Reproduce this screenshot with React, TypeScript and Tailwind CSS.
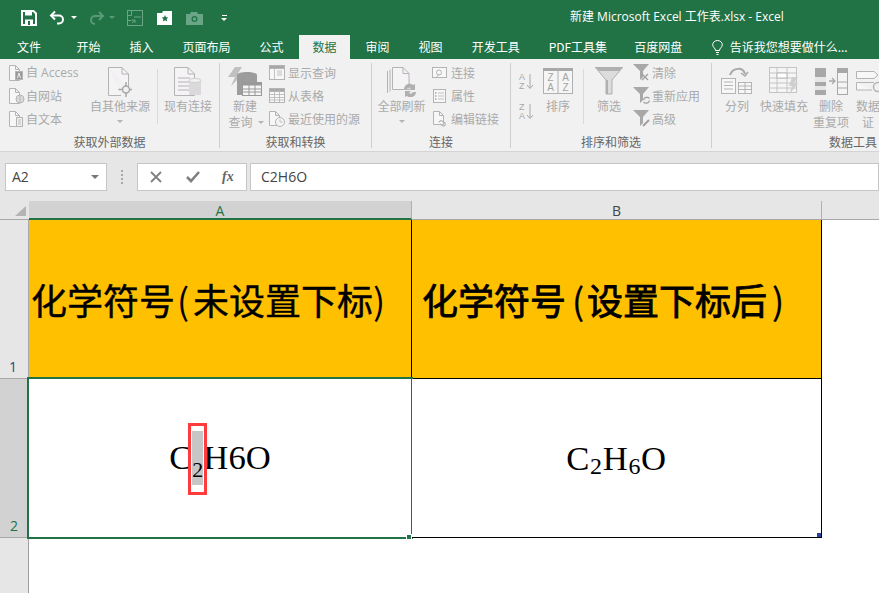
import React from "react";

const FONT = '"Noto Sans CJK SC", "Noto Sans", sans-serif';
const LATIN = '"Open Sans", "Noto Sans CJK SC", sans-serif';
const G = "#b4b4b4";

function Svg({ w, h, children }: { w: number; h: number; children: React.ReactNode }) {
  return (
    <svg width={w} height={h} viewBox={`0 0 ${w} ${h}`} fill="none" stroke={G} strokeWidth="1" className="block shrink-0">
      {children}
    </svg>
  );
}

function Page({ x = 0.5, y = 0.5, w = 12, h = 16, f = 4 }: { x?: number; y?: number; w?: number; h?: number; f?: number }) {
  return <path d={`M${x} ${y}H${x + w - f}L${x + w} ${y + f}V${y + h}H${x}Z M${x + w - f} ${y}V${y + f}H${x + w}`} fill="#f7f7f7" />;
}

function SmallIcon({ kind }: { kind: string }) {
  if (kind === "access")
    return (
      <Svg w={16} h={16}>
        <Page w={10} h={15} />
        <rect x="6.5" y="6.5" width="7" height="8" fill="#9a9a9a" />
        <path d="M8.5 13l1.5-5 1.5 5" stroke="#eee" />
      </Svg>
    );
  if (kind === "web")
    return (
      <Svg w={16} h={16}>
        <Page w={10} h={15} />
        <circle cx="11" cy="11" r="4" fill="#f0f0f0" />
        <path d="M7 11h8M11 7v8M8.5 9h5M8.5 13h5" strokeWidth="0.8" />
      </Svg>
    );
  if (kind === "text")
    return (
      <Svg w={16} h={16}>
        <Page w={10} h={15} />
        <rect x="7.5" y="6.5" width="6" height="9" fill="#f0f0f0" />
        <path d="M9 9h3M9 11h3M9 13h3" strokeWidth="0.8" />
      </Svg>
    );
  if (kind === "show")
    return (
      <Svg w={16} h={16}>
        <rect x="0.5" y="0.5" width="15" height="14" fill="#f7f7f7" />
        <rect x="0.5" y="0.5" width="15" height="3" fill="#a8a8a8" />
        <path d="M5.5 3.5v11M8 6h5M8 8h5M8 10h5" strokeWidth="0.8" />
      </Svg>
    );
  if (kind === "table")
    return (
      <Svg w={16} h={16}>
        <rect x="0.5" y="0.5" width="15" height="14" fill="#f7f7f7" />
        <rect x="0.5" y="0.5" width="15" height="3" fill="#a8a8a8" />
        <path d="M5.5 .5v14M10.5 .5v14M.5 6.5h15M.5 9.5h15M.5 12h15" strokeWidth="0.8" />
      </Svg>
    );
  if (kind === "recent")
    return (
      <Svg w={16} h={16}>
        <Page w={10} h={14} />
        <circle cx="11" cy="11" r="4.5" fill="#f4f4f4" />
        <path d="M11 8.5V11h2.5" strokeWidth="0.8" />
      </Svg>
    );
  if (kind === "conn")
    return (
      <Svg w={16} h={16}>
        <rect x="0.5" y="2.5" width="14" height="10" fill="#f7f7f7" />
        <circle cx="7" cy="7.5" r="2.5" />
        <path d="M4 12.5l3-3" />
      </Svg>
    );
  if (kind === "prop")
    return (
      <Svg w={16} h={16}>
        <rect x="1.5" y="1.5" width="12" height="13" fill="#f7f7f7" />
        <path d="M6 5h6M6 8h6M6 11h6" strokeWidth="0.8" />
        <path d="M3 5h1.5M3 8h1.5M3 11h1.5" stroke="#888" />
      </Svg>
    );
  if (kind === "edit")
    return (
      <Svg w={16} h={16}>
        <Page x={1.5} w={10} h={13} />
        <path d="M7 11.5a2 2 0 013-1.5l3 2a2 2 0 01-2 3l-3-2" strokeWidth="1.2" />
      </Svg>
    );
  const funnel = <path d="M0 0H16L10 7V13L7 16V7Z" fill="#a8a8a8" stroke="none" />;
  return (
    <Svg w={18} h={18}>
      {funnel}
      {kind === "clear" && <path d="M9 10l6 6M15 10l-6 6" strokeWidth="1.4" stroke="#a0a0a0" />}
      {kind === "reapply" && <path d="M10.5 13a3.5 3.5 0 016-1.5M16.5 13.5a3.5 3.5 0 01-6 1.5" strokeWidth="1.2" stroke="#a0a0a0" />}
      {kind === "adv" && <path d="M10 16l6-6" strokeWidth="2" stroke="#a0a0a0" />}
    </Svg>
  );
}

function SmallRow({ icon, text, gap = 3, latin }: { icon: string; text: string; gap?: number; latin?: boolean }) {
  return (
    <div className="flex h-[23px] items-center whitespace-nowrap pb-[2px]" style={{ gap }}>
      <SmallIcon kind={icon} />
      <span style={latin ? { fontFamily: LATIN } : undefined}>{text}</span>
    </div>
  );
}

function Caret() {
  return <span className="block h-0 w-0 border-x-[3px] border-t-[3px] border-x-transparent border-t-[#b4b4b4]" />;
}

function Big({ w, icon, lines, caret }: { w: number; icon: React.ReactNode; lines: React.ReactNode[]; caret?: boolean }) {
  return (
    <div className="flex shrink-0 flex-col items-center" style={{ width: w }}>
      <div className="flex h-[31px] items-start justify-center">{icon}</div>
      {lines.map((l, i) => (
        <div key={i} className="flex h-[16px] items-center gap-[5px] whitespace-nowrap leading-[16px]">
          {l}
        </div>
      ))}
      {caret && (
        <div className="flex h-[14px] w-full items-center justify-center">
          <Caret />
        </div>
      )}
    </div>
  );
}

function Group({ w, label, children }: { w: number; label: string; children: React.ReactNode }) {
  return (
    <div className="flex shrink-0 flex-col" style={{ width: w }}>
      <div className="flex h-[69px] items-start">{children}</div>
      <div className="mt-auto h-[17px] text-center leading-[16px] text-[#666]">{label}</div>
    </div>
  );
}

function Sep() {
  return <div className="mt-[1px] h-[85px] w-px shrink-0 bg-[#cfcfcf]" />;
}

function InnerSep() {
  return <div className="mt-[7px] h-[55px] w-px shrink-0 bg-[#dadada]" />;
}

const tabs = ["开始", "插入", "页面布局", "公式", "数据", "审阅", "视图", "开发工具", "PDF工具集", "百度网盘"];

export default function App() {
  return (
    <div className="h-[593px] w-[879px] overflow-hidden bg-white text-[12px]" style={{ fontFamily: FONT }}>
      {/* title bar */}
      <div className="relative flex h-[35px] items-center bg-[#217346] text-white">
        <div className="flex items-center pl-[21px]">
          <svg width="16" height="16" viewBox="0 0 16 16" className="mr-[12px]">
            <path d="M1 1H12.5L15 3.5V15H1Z" fill="none" stroke="#fff" strokeWidth="2" />
            <rect x="4" y="1" width="7" height="4.5" fill="#fff" />
            <rect x="4" y="9.5" width="8" height="5.5" fill="#fff" />
            <rect x="7" y="11" width="2" height="4" fill="#217346" />
          </svg>
          <svg width="18" height="16" viewBox="0 0 18 16" fill="none" stroke="#fff" strokeWidth="2" className="mr-[4px]">
            <path d="M6 1.5L2 5.5l4 4" />
            <path d="M2.5 5.5H10a4 4 0 010 8H8" />
          </svg>
          <span className="mr-[12px] h-0 w-0 border-x-[3px] border-t-[3px] border-x-transparent border-t-white" />
          <svg width="16" height="14" viewBox="0 0 16 14" fill="none" stroke="#5a9a78" strokeWidth="2" className="mr-[4px]">
            <path d="M10 1l4 4-4 4" />
            <path d="M14 5H6a4 4 0 000 8" />
          </svg>
          <span className="mr-[12px] h-0 w-0 border-x-[3px] border-t-[3px] border-x-transparent border-t-[#5a9a78]" />
          <svg width="16" height="16" viewBox="0 0 16 16" fill="none" stroke="#6ba587" className="mr-[14px]">
            <rect x="0.5" y="0.5" width="15" height="15" />
            <path d="M.5 5.5h4v-5M.5 10.5h4M7 7h7M5 13l3-3M8 13V10H5" />
          </svg>
          <svg width="16" height="16" viewBox="0 0 16 16" className="mr-[13px]">
            <path d="M0 3H5L6 1H15V15H0Z" fill="#fff" />
            <path d="M8 5l1 2.2 2.4.2-1.8 1.6.6 2.4L8 10.2 5.800 11.400l.6-2.4L4.600 7.400 7 7.200Z" fill="#217346" />
          </svg>
          <svg width="17" height="14" viewBox="0 0 17 14" className="mr-[18px]">
            <path d="M0 3H4L5 1H11L12 3H17V14H0Z" fill="#6ba587" />
            <circle cx="8.500" cy="8" r="3" fill="#217346" />
            <circle cx="8.500" cy="8" r="1.700" fill="#6ba587" />
          </svg>
          <span className="flex flex-col items-center gap-[2px]">
            <span className="h-px w-[5px] bg-white" />
            <span className="h-0 w-0 border-x-[3px] border-t-[3px] border-x-transparent border-t-white" />
          </span>
        </div>
        <div className="absolute left-[570px] top-[8px] whitespace-nowrap leading-[18px]" style={{ fontFamily: LATIN }}>新建 Microsoft Excel 工作表.xlsx - Excel</div>
      </div>

      {/* tabs */}
      <div className="flex h-[24px] items-stretch gap-[2px] bg-[#217346] pl-[3px] leading-[24px] text-white">
        <div className="mr-[6px] px-[14px]">文件</div>
        {tabs.map((t) => (
          <div key={t} className={t === "数据" ? "bg-[#f1f1f1] px-[13.5px] text-[#217346]" : t === "PDF工具集" ? "mr-[-2px] px-[13.5px]" : "px-[13.5px]"}>
            {t}
          </div>
        ))}
        <div className="ml-[14px] flex items-center gap-[7px] whitespace-nowrap">
          <svg width="11" height="15" viewBox="0 0 11 15" fill="none" stroke="#fff">
            <path d="M3.500 10.500C3.500 8 .7 7.500 .7 4.700a4.800 4.200 0 019.600 0C10.300 7.500 7.500 8 7.500 10.500Z" />
            <path d="M4 12.500h3M4.500 14.500h2" />
          </svg>
          <span>告诉我您想要做什么...</span>
        </div>
      </div>

      {/* ribbon */}
      <div className="flex h-[93px] overflow-hidden border-b border-[#d4d4d4] bg-[#f1f1f1] pt-[3px] text-[#aaaaaa]">
        <Group w={219} label="获取外部数据">
          <div className="ml-[9px] w-[81px] shrink-0">
            <SmallRow icon="access" text="自 Access" gap={1} latin />
            <SmallRow icon="web" text="自网站" gap={1} />
            <SmallRow icon="text" text="自文本" gap={1} />
          </div>
          <div className="pt-[5px]">
            <Big
              w={60}
              lines={["自其他来源"]}
              caret
              icon={
                <svg width="24" height="30" viewBox="0 0 24 30" fill="none" stroke={G}>
                  <path d="M.5 .5H14L20.500 7V20M.5 .5V28.500H13" fill="#f5f3f5" />
                  <path d="M14 .5V7H20.500" />
                  <circle cx="18" cy="22.500" r="3.500" strokeWidth="1.500" stroke="#a8a8a8" />
                  <path d="M18 15v4M18 26v4M10.500 22.500h4M21.500 22.500h2.500" strokeWidth="1.500" stroke="#a8a8a8" />
                </svg>
              }
            />
          </div>
          <div className="ml-[7px]">
            <InnerSep />
          </div>
          <div className="ml-[5px] pt-[5px]">
            <Big
              w={50}
              lines={["现有连接"]}
              icon={
                <svg width="28" height="30" viewBox="0 0 28 30" fill="none" stroke={G}>
                  <path d="M.5 .5H14L20.500 7V28.500H.5Z" fill="#f5f3f5" />
                  <path d="M14 .5V7H20.500M4 11h12M4 15h12M4 19h12M4 23h12" />
                  <path d="M15 13.500c0-3 12-3 12 0V28H15Z" fill="#dcd9dc" stroke="none" />
                  <ellipse cx="21" cy="13.500" rx="6" ry="2" fill="#f1f1f1" stroke="#cfcfcf" />
                </svg>
              }
            />
          </div>
        </Group>
        <Sep />
        <Group w={151} label="获取和转换">
          <div className="ml-[5px] w-[44px] shrink-0 pt-[5px]">
            <Big
              w={40}
              lines={[
                "新建",
                <React.Fragment key="q">
                  <span className="ml-[2px]">查询</span>
                  <Caret />
                </React.Fragment>,
              ]}
              icon={
                <svg width="34" height="30" viewBox="0 0 34 30" fill="none">
                  <path d="M7 0h7L9 8h5L3 19 7 10H0Z" fill="#c0c0c0" />
                  <path d="M9 8c0-4 20-4 20 0v20H9Z" fill="#9c9c9c" />
                  <rect x="14.500" y="15.500" width="19" height="13" fill="#f5f5f5" stroke="#999" />
                  <rect x="14.500" y="15.500" width="19" height="3" fill="#999" />
                  <path d="M14.500 22h19M14.500 25h19M21 15.500v13M27 15.500v13" stroke="#999" />
                </svg>
              }
            />
          </div>
          <div className="shrink-0">
            <SmallRow icon="show" text="显示查询" />
            <SmallRow icon="table" text="从表格" />
            <SmallRow icon="recent" text="最近使用的源" />
          </div>
        </Group>
        <Sep />
        <Group w={138} label="连接">
          <div className="ml-[5px] w-[49px] shrink-0 pt-[5px]">
            <Big
              w={49}
              lines={["全部刷新"]}
              caret
              icon={
                <svg width="30" height="30" viewBox="0 0 30 30" fill="none" stroke={G}>
                  <path d="M.5 4V26M3 2.500V24.500M5.500 .5H16L22 6.500V22.500H5.500Z" fill="#f5f3f5" />
                  <path d="M16 .5V6.500H22" />
                  <path d="M17 22a5.500 5.500 0 019-4l2-1v6h-6l2-2a3 3 0 00-4 1ZM29 25a5.500 5.500 0 01-9 4l-2 1v-6h6l-2 2a3 3 0 004-1Z" fill="#b0b0b0" stroke="none" />
                </svg>
              }
            />
          </div>
          <div className="ml-[6px]">
            <SmallRow icon="conn" text="连接" />
            <SmallRow icon="prop" text="属性" />
            <SmallRow icon="edit" text="编辑链接" />
          </div>
        </Group>
        <Sep />
        <Group w={200} label="排序和筛选">
          <div className="ml-[8px] flex w-[23px] shrink-0 flex-col gap-[12px] pt-[11px]">
            {[["A", "Z"], ["Z", "A"]].map(([a, b]) => (
              <div key={a} className="flex items-center gap-[1px] text-[9px] leading-[9px] text-[#a8a8a8]" style={{ fontFamily: '"Liberation Sans", sans-serif' }}>
                <span className="flex flex-col">
                  <span>{a}</span>
                  <span>{b}</span>
                </span>
                <svg width="8" height="16" viewBox="0 0 8 16" fill="none" stroke="#a8a8a8">
                  <path d="M4 0V14M1 11l3 3.500L7 11" />
                </svg>
              </div>
            ))}
          </div>
          <div className="ml-[1px] pt-[5px]">
            <Big
              w={30}
              lines={["排序"]}
              icon={
                <svg width="30" height="26" viewBox="0 0 30 26" className="mt-[1px]" stroke="#b0b0b0" fill="#f5f5f5">
                  <rect x="0.500" y="0.500" width="29" height="25" />
                  <rect x="0" y="0" width="30" height="3" fill="#a8a8a8" stroke="none" />
                  <path d="M15 0v26" />
                  <text x="7.500" y="13" textAnchor="middle" fontSize="10" fill="#a4a4a4" stroke="none" fontFamily="Liberation Sans">Z</text>
                  <text x="22.500" y="13" textAnchor="middle" fontSize="10" fill="#a4a4a4" stroke="none" fontFamily="Liberation Sans">A</text>
                  <text x="7.500" y="23" textAnchor="middle" fontSize="10" fill="#a4a4a4" stroke="none" fontFamily="Liberation Sans">A</text>
                  <text x="22.500" y="23" textAnchor="middle" fontSize="10" fill="#a4a4a4" stroke="none" fontFamily="Liberation Sans">Z</text>
                </svg>
              }
            />
          </div>
          <div className="ml-[10px]">
            <InnerSep />
          </div>
          <div className="ml-[6px] pt-[5px]">
            <Big
              w={38}
              lines={["筛选"]}
              icon={
                <svg width="28" height="28" viewBox="0 0 28 28">
                  <path d="M0 0H28L17 13V27H11V13Z" fill="#dcdcdc" stroke="#b0b0b0" />
                  <path d="M0 0H28L24 4H4Z" fill="#b0b0b0" />
                  <path d="M11 13V27H13V13Z" fill="#b0b0b0" />
                </svg>
              }
            />
          </div>
          <div className="ml-[5px]">
            <SmallRow icon="clear" text="清除" gap={1} />
            <SmallRow icon="reapply" text="重新应用" gap={1} />
            <SmallRow icon="adv" text="高级" gap={1} />
          </div>
        </Group>
        <Sep />
        <Group w={282} label="数据工具">
          <div className="ml-[2px] pt-[5px]">
            <Big
              w={46}
              lines={["分列"]}
              icon={
                <svg width="32" height="29" viewBox="0 0 32 29" fill="none" stroke={G}>
                  <path d="M9 8C12 0 22 0 24 7" strokeWidth="2" stroke="#a8a8a8" />
                  <path d="M20 6l4 3 3-4" strokeWidth="1.500" stroke="#a8a8a8" />
                  <rect x="0.500" y="11.500" width="14" height="15" fill="#f7f7f7" />
                  <path d="M3 15h9M3 18.500h9M3 22h9" />
                  <rect x="17.500" y="15.500" width="13" height="11" fill="#f7f7f7" />
                  <path d="M17.500 19h13M17.500 22.500h13M24 15.500v11" />
                </svg>
              }
            />
          </div>
          <div className="pt-[5px]">
            <Big
              w={48}
              lines={["快速填充"]}
              icon={
                <svg width="30" height="28" viewBox="0 0 30 28" fill="none" stroke="#c4c4c4">
                  <rect x="0.500" y="0.500" width="27" height="25" fill="#f5f5f5" />
                  <path d="M.5 6h27M.5 11h27M.5 16h27M.5 21h27M8 .5v25M18 .5v25" />
                  <rect x="8" y="6" width="10" height="5" fill="#fff" stroke="#b8b8b8" />
                  <path d="M23 10h6l-4 6h4L20 28l3-9h-3Z" fill="#cfcfcf" stroke="none" />
                </svg>
              }
            />
          </div>
          <div className="ml-[5px] pt-[5px]">
            <Big
              w={36}
              lines={["删除", "重复项"]}
              icon={
                <svg width="33" height="27" viewBox="0 0 33 27" className="mt-[1px]">
                  <rect x="0" y="0" width="11" height="27" fill="#a8a8a8" />
                  <rect x="0" y="9" width="11" height="5" fill="#e6e6e6" />
                  <rect x="0" y="18" width="11" height="4" fill="#e6e6e6" />
                  <rect x="22.500" y="0.500" width="10" height="26" fill="#f4f4f4" stroke="#a8a8a8" />
                  <rect x="22" y="0" width="11" height="5" fill="#a8a8a8" />
                  <path d="M23 14h10M23 20h10" stroke="#a8a8a8" />
                  <path d="M14 13h5M17 10l3 3-3 3" fill="none" stroke="#a8a8a8" strokeWidth="1.300" />
                </svg>
              }
            />
          </div>
          <div className="ml-[4px] pt-[5px]">
            <Big
              w={30}
              lines={["数据", "证"]}
              icon={
                <svg width="30" height="28" viewBox="0 0 30 28" fill="none" stroke={G} className="ml-[5px]">
                  <path d="M.5 4.500H18L22 8l-4 3.500H.5ZM.5 15.500H18M.5 15.500V23H16" fill="#f7f7f7" />
                  <circle cx="22" cy="20" r="4.500" strokeWidth="1.500" />
                </svg>
              }
            />
          </div>
        </Group>
      </div>

      {/* formula bar */}
      <div className="flex h-[49px] items-center bg-[#e6e6e6] pb-[10px] pl-[5px] pt-[10px] text-[#444]">
        <div className="flex h-[28px] w-[102px] items-center justify-between border border-[#c6c6c6] bg-white pl-[6px] pr-[7px] text-[14px]" style={{ fontFamily: '"Open Sans", sans-serif' }}>
          <span>A2</span>
          <span className="h-0 w-0 border-x-[4px] border-t-[4px] border-x-transparent border-t-[#777]" />
        </div>
        <div className="mx-[14px] flex flex-col gap-[2px]">
          <span className="block h-[2px] w-[2px] bg-[#a8a8a8]" />
          <span className="block h-[2px] w-[2px] bg-[#a8a8a8]" />
          <span className="block h-[2px] w-[2px] bg-[#a8a8a8]" />
          <span className="block h-[2px] w-[2px] bg-[#a8a8a8]" />
        </div>
        <div className="flex h-[28px] w-[110px] items-center border border-[#c6c6c6] bg-white pl-[12px]">
          <svg width="12" height="12" viewBox="0 0 12 12" stroke="#808080" strokeWidth="1.800" className="mr-[24px]">
            <path d="M1 1l10 10M11 1L1 11" />
          </svg>
          <svg width="14" height="12" viewBox="0 0 14 12" stroke="#808080" strokeWidth="2.600" fill="none" className="mr-[22px]">
            <path d="M1 6l4 4 8-9" />
          </svg>
          <span className="text-[14px] font-bold italic leading-none text-[#666]" style={{ fontFamily: '"Liberation Serif", serif' }}>fx</span>
        </div>
        <div className="ml-[3px] flex h-[28px] flex-1 items-center border border-[#c6c6c6] bg-white pl-[10px] text-[14px]" style={{ fontFamily: '"Open Sans", sans-serif' }}>
          C2H6O
        </div>
      </div>

      {/* sheet */}
      <div className="grid h-[392px] grid-cols-[29px_383px_410px_1fr] grid-rows-[19px_159px_159px_1fr] text-[#444]">
        <div className="relative border-b border-[#a8a8a8] bg-[#e6e6e6]">
          <span className="absolute bottom-[3px] right-[3px] h-0 w-0 border-b-[10px] border-l-[11px] border-b-[#b4b4b4] border-l-transparent" />
        </div>
        <div className="border-b-[2px] border-r border-b-[#217346] border-r-[#b0b0b0] bg-[#d2d2d2] text-center text-[14px] leading-[19px] text-[#217346]" style={{ fontFamily: '"Open Sans", sans-serif' }}>
          A
        </div>
        <div className="border-b border-r border-b-[#a8a8a8] border-r-[#b0b0b0] bg-[#e6e6e6] text-center text-[14px] leading-[19px]" style={{ fontFamily: '"Open Sans", sans-serif' }}>
          B
        </div>
        <div className="border-b border-[#a8a8a8] bg-[#e6e6e6]" />

        <div className="flex items-end justify-end border-b border-r border-[#a8a8a8] bg-[#e6e6e6] pb-[3px] pr-[11px] text-[14px] leading-[17px] text-[#1a4f7a]" style={{ fontFamily: '"Open Sans", sans-serif' }}>
          1
        </div>
        <div className="flex items-center whitespace-nowrap border-b border-r border-black bg-[#ffc000] pl-[2px] text-[36px] leading-[44px] text-black [-webkit-text-stroke:0.4px_black]">
          <span>化学符号</span>
          <span className="w-[18px] pl-[2px] [-webkit-text-stroke:0px]">(</span>
          <span>未设置下标</span>
          <span className="w-[18px] [-webkit-text-stroke:0px]">)</span>
        </div>
        <div className="flex items-center whitespace-nowrap border-b border-r border-black bg-[#ffc000] pl-[10px] text-[36px] leading-[44px] text-black [-webkit-text-stroke:0.8px_black]">
          <span>化学符号</span>
          <span className="w-[21px] pl-[6px] [-webkit-text-stroke:0.3px_black]">(</span>
          <span>设置下标后</span>
          <span className="w-[21px] pl-[5px] [-webkit-text-stroke:0.3px_black]">)</span>
        </div>
        <div className="bg-white" />

        <div className="flex items-end justify-end border-b border-[#a8a8a8] bg-[#d2d2d2] pb-[3px] pr-[11px] text-[14px] leading-[17px] text-[#217346]" style={{ fontFamily: '"Open Sans", sans-serif' }}>
          2
        </div>
        <div className="relative flex items-center justify-center whitespace-nowrap border-r border-black bg-white pb-[4px] text-[34.67px] leading-[44px] text-black" style={{ fontFamily: '"Liberation Serif", serif' }}>
          <span>C</span>
          <span className="relative inline-block h-[54px] w-[11px] translate-y-[1px] bg-[#c6c6c6] text-[22px] leading-[77px]">
            2
            <span className="absolute left-[-4px] top-[-8px] h-[72px] w-[19px] border-[3px] border-[#ff3b3b]" />
          </span>
          <span>H6O</span>
          <span className="absolute left-[-2px] top-[-2px] h-[162px] w-[386px] border-[2px] border-[#217346]" />
          <span className="absolute bottom-[-2px] right-[-1px] h-[6px] w-[6px] border border-white bg-[#217346]" />
        </div>
        <div className="relative flex items-center justify-center border-b border-r border-black bg-white pt-[8px] text-[34.67px] leading-[44px] tracking-[0.7px] text-black" style={{ fontFamily: '"Liberation Serif", serif' }}>
          <span>
            C<span className="align-[-4px] text-[24px]">2</span>H<span className="align-[-4px] text-[24px]">6</span>O
          </span>
          <span className="absolute bottom-0 right-0 h-[4px] w-[4px] bg-[#2f3f9e]" />
        </div>
        <div className="bg-white" />

        <div className="border-r border-[#a0a0a0] bg-[#e6e6e6]" />
        <div className="col-span-3 bg-white" />
      </div>
    </div>
  );
}
